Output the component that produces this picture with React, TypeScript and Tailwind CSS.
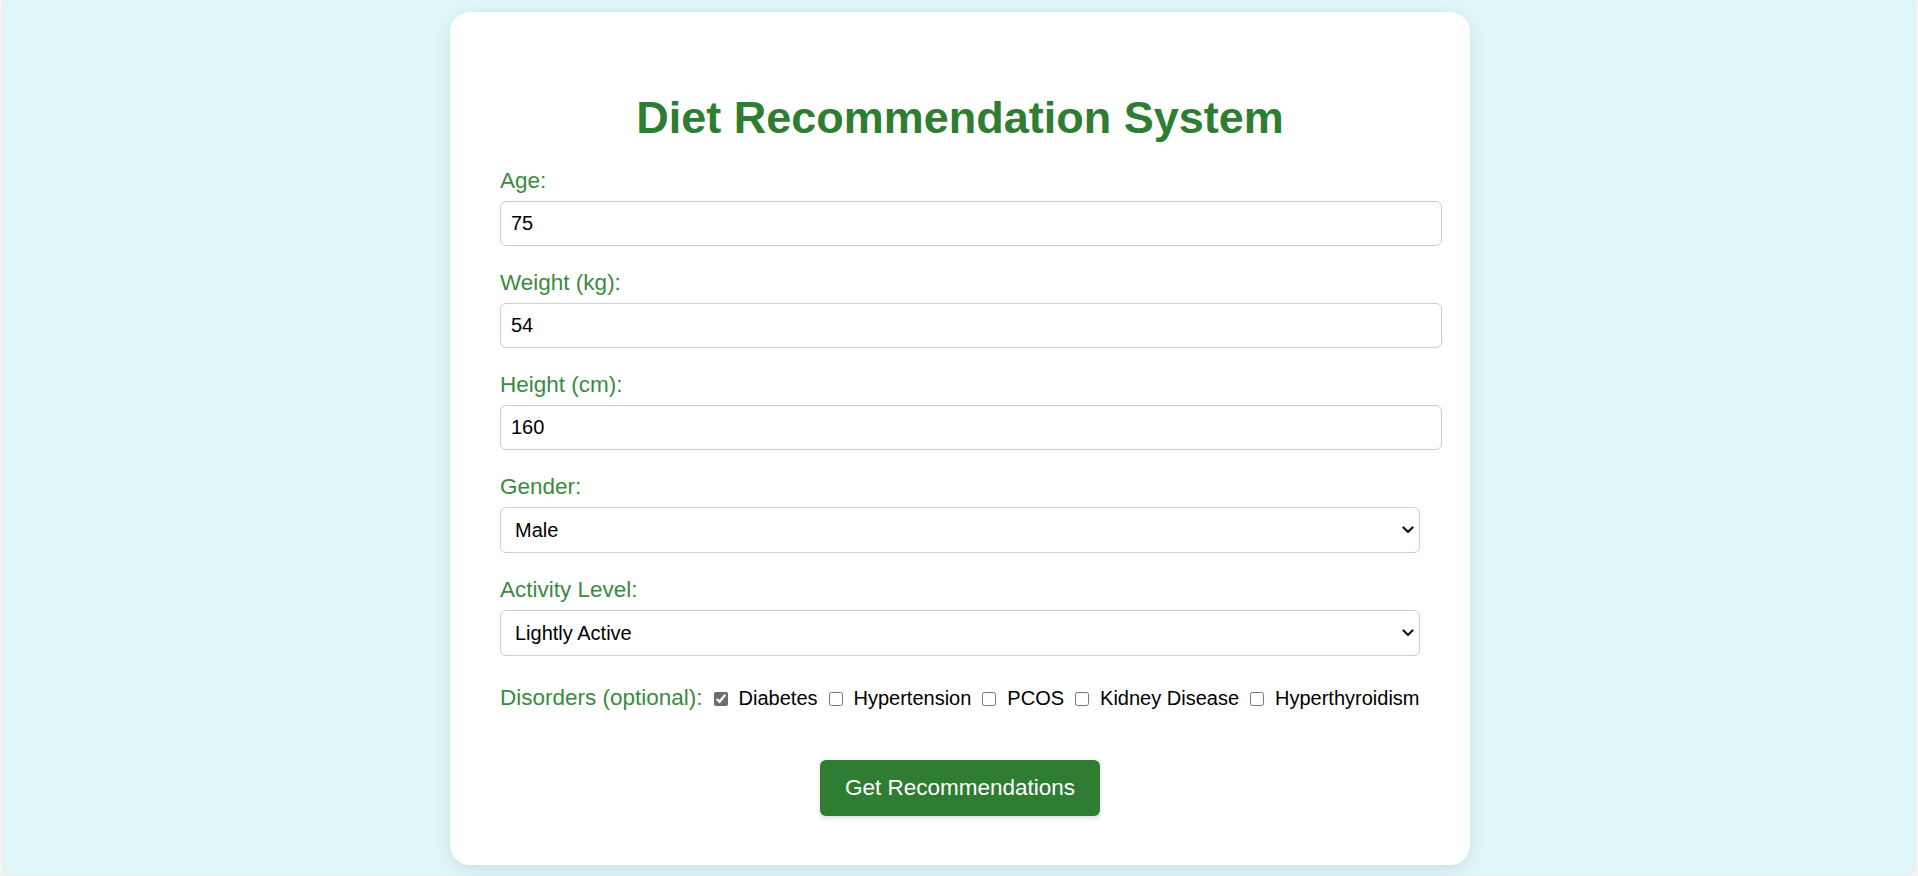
import { useState } from "react";

const disorders = ["Diabetes", "Hypertension", "PCOS", "Kidney Disease", "Hyperthyroidism"];

function Chevron() {
  return (
    <svg
      className="pointer-events-none absolute right-[6px] top-1/2 -translate-y-1/2"
      width="12"
      height="8"
      viewBox="0 0 12 8"
      fill="none"
    >
      <path d="M1.5 1.5 L6 6 L10.5 1.5" stroke="#111" strokeWidth="2.2" strokeLinecap="round" strokeLinejoin="round" />
    </svg>
  );
}

export default function App() {
  const [checked, setChecked] = useState<Record<string, boolean>>({ Diabetes: true });

  return (
    <main className="min-h-[876px] bg-[#f3f3f3] px-[4px] font-['Liberation_Sans',Arial,sans-serif]">
      <div className="h-[875px] rounded-b-[8px] bg-[#e0f7fa] pt-[12px] shadow-[0_0_3px_rgba(0,0,0,0.08)]">
        <div className="mx-auto w-[1020px] translate-x-[1px] rounded-[20px] bg-white px-[50px] pb-[49px] pt-[80px] shadow-[0_4px_16px_rgba(0,0,0,0.1)]">
          <h1 className="mb-[24px] text-center text-[45px] font-bold leading-[52px] text-[#2e7d32]">
            Diet Recommendation System
          </h1>

          <form onSubmit={(e) => e.preventDefault()}>
            <label className="mb-[7px] block text-[22.5px] leading-[26px] text-[#3b8b3f]">Age:</label>
            <input
              type="number"
              defaultValue={75}
              className="mb-[24px] box-content block w-full rounded-[6px] border border-[#cccccc] px-[10px] py-[10px] text-[20px] leading-[23px] text-black outline-none [appearance:textfield]"
            />

            <label className="mb-[7px] block text-[22.5px] leading-[26px] text-[#3b8b3f]">Weight (kg):</label>
            <input
              type="number"
              defaultValue={54}
              className="mb-[24px] box-content block w-full rounded-[6px] border border-[#cccccc] px-[10px] py-[10px] text-[20px] leading-[23px] text-black outline-none [appearance:textfield]"
            />

            <label className="mb-[7px] block text-[22.5px] leading-[26px] text-[#3b8b3f]">Height (cm):</label>
            <input
              type="number"
              defaultValue={160}
              className="mb-[24px] box-content block w-full rounded-[6px] border border-[#cccccc] px-[10px] py-[10px] text-[20px] leading-[23px] text-black outline-none [appearance:textfield]"
            />

            <label className="mb-[7px] block text-[22.5px] leading-[26px] text-[#3b8b3f]">Gender:</label>
            <div className="relative mb-[24px]">
              <select
                defaultValue="Male"
                className="block h-[46px] w-full appearance-none rounded-[6px] border border-[#cccccc] bg-white pl-[14px] pr-[30px] text-[20px] text-black outline-none"
              >
                <option>Male</option>
                <option>Female</option>
              </select>
              <Chevron />
            </div>

            <label className="mb-[7px] block text-[22.5px] leading-[26px] text-[#3b8b3f]">Activity Level:</label>
            <div className="relative mb-[29px]">
              <select
                defaultValue="Lightly Active"
                className="block h-[46px] w-full appearance-none rounded-[6px] border border-[#cccccc] bg-white pl-[14px] pr-[30px] text-[20px] text-black outline-none"
              >
                <option>Sedentary</option>
                <option>Lightly Active</option>
                <option>Moderately Active</option>
                <option>Very Active</option>
              </select>
              <Chevron />
            </div>

            <div className="flex h-[26px] items-center whitespace-nowrap">
              <span className="text-[22.5px] leading-[26px] text-[#3b8b3f]">Disorders (optional):</span>
              {disorders.map((d) => (
                <label key={d} className="flex items-center text-[20px] leading-[26px] text-black">
                  <input
                    type="checkbox"
                    checked={!!checked[d]}
                    onChange={() => setChecked({ ...checked, [d]: !checked[d] })}
                    className="ml-[11px] mr-[11px] mt-[1px] h-[14px] w-[14px] accent-[#6e6e6e]"
                  />
                  {d}
                </label>
              ))}
            </div>

            <div className="mt-[49px] flex justify-center">
              <button
                type="submit"
                className="rounded-[6px] bg-[#2e7d32] px-[25px] py-[15px] text-[22.5px] leading-[26px] text-white shadow-[0_2px_5px_rgba(0,0,0,0.15)]"
              >
                Get Recommendations
              </button>
            </div>
          </form>
        </div>
      </div>
    </main>
  );
}
